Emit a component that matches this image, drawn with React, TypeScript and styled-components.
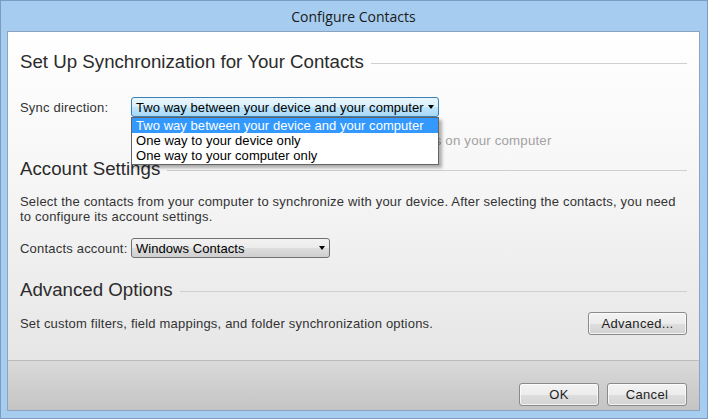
import React from "react";
import styled, { createGlobalStyle } from "styled-components";

const GlobalStyle = createGlobalStyle`
  html, body {
    margin: 0;
    padding: 0;
    background: #ffffff;
  }
  body {
    font-family: "Liberation Sans", Arial, sans-serif;
    color: #1e1e1e;
  }
`;

const Window = styled.div`
  width: 708px;
  height: 419px;
  box-sizing: border-box;
  background: #a6cdf0;
  border: 1px solid #7b9cc2;
  display: flex;
  flex-direction: column;
  padding: 0 7px 7px 6px;
`;

const TitleBar = styled.div`
  height: 29px;
  display: flex;
  align-items: center;
  justify-content: center;
  font-family: "Open Sans", "Noto Sans", sans-serif;
  font-size: 14px;
  color: #1a1a1a;
  padding-top: 1px;
`;

const Panel = styled.div`
  flex: 1;
  display: flex;
  flex-direction: column;
  border: 1px solid #8ba3bf;
  min-height: 0;
`;

const Main = styled.div`
  flex: 1;
  position: relative;
  padding: 18px 12px 0 12px;
  background: linear-gradient(#ffffff 0%, #f6f6f6 45%, #e6e6e6 100%);
`;

const Heading = styled.div<{ $mt?: number }>`
  display: flex;
  align-items: center;
  height: 24px;
  margin-top: ${(p) => p.$mt ?? 0}px;
  font-size: 18.7px;
  color: #2b2b2b;
  white-space: nowrap;
  &::after {
    content: "";
    flex: 1;
    height: 1px;
    margin-left: 7px;
    margin-top: 2px;
    background: #cfcfcf;
  }
`;

const Row = styled.div<{ $mt?: number }>`
  display: flex;
  align-items: center;
  margin-top: ${(p) => p.$mt ?? 0}px;
  position: relative;
`;

const Label = styled.span`
  width: 111px;
  font-size: 13px;
  letter-spacing: 0.2px;
  color: #333;
`;

const Text = styled.p<{ $mt?: number }>`
  margin: ${(p) => p.$mt ?? 0}px 0 0 0;
  font-size: 13px;
  line-height: 15px;
  letter-spacing: 0.2px;
  color: #333;
`;

const Faded = styled.div`
  margin: 16px 0 0 111px;
  font-size: 13.3px;
  line-height: 16px;
  letter-spacing: 0.17px;
  color: #a2a2a2;
  white-space: nowrap;
`;

const SelectBox = styled.div<{ $w: number; $focused?: boolean }>`
  position: relative;
  width: ${(p) => p.$w}px;
  height: 20px;
  box-sizing: border-box;
  border: 1px solid ${(p) => (p.$focused ? "#3c7fb1" : "#707070")};
  border-radius: 3px;
  background: ${(p) =>
    p.$focused
      ? "linear-gradient(#eaf6fd 0%, #d9f0fc 50%, #bee6fd 51%, #a7d9f5 100%)"
      : "linear-gradient(#f2f2f2 0%, #ebebeb 50%, #dddddd 51%, #cfcfcf 100%)"};
  display: flex;
  align-items: center;
  padding: 0 4px;
  font-size: 13px;
  letter-spacing: 0.05px;
  color: #000;
  white-space: nowrap;
`;

const SelectText = styled.span`
  flex: 1;
`;

const Caret = styled.span`
  width: 0;
  height: 0;
  border-left: 3px solid transparent;
  border-right: 3px solid transparent;
  border-top: 4px solid #000;
  margin-left: 2px;
`;

const DropList = styled.div`
  position: absolute;
  left: 111px;
  top: 20px;
  width: 308px;
  box-sizing: border-box;
  border: 1px solid #646464;
  background: #fff;
  box-shadow: 3px 3px 3px rgba(0, 0, 0, 0.3);
  z-index: 5;
  padding-bottom: 1px;
`;

const Option = styled.div<{ $active?: boolean }>`
  height: 15px;
  line-height: 15px;
  padding: 0 4px;
  font-size: 13px;
  letter-spacing: 0.05px;
  white-space: nowrap;
  background: ${(p) => (p.$active ? "#3399ff" : "transparent")};
  color: ${(p) => (p.$active ? "#fff" : "#000")};
`;

const Spacer = styled.div`
  flex: 1;
`;

const Button = styled.button<{ $w: number }>`
  width: ${(p) => p.$w}px;
  height: 23px;
  box-sizing: border-box;
  border: 1px solid #8a8a8a;
  border-radius: 3px;
  background: linear-gradient(#f3f3f3 0%, #ececec 50%, #dedede 51%, #d3d3d3 100%);
  box-shadow: inset 0 0 0 1px rgba(255, 255, 255, 0.7);
  font-family: "Liberation Sans", Arial, sans-serif;
  font-size: 13px;
  letter-spacing: 0.3px;
  color: #1e1e1e;
  padding: 0;
`;

const Footer = styled.div`
  height: 50px;
  box-sizing: border-box;
  border-top: 1px solid #bcbcbc;
  background: linear-gradient(#dadada, #c4c4c4);
  display: flex;
  justify-content: flex-end;
  align-items: flex-start;
  gap: 8px;
  padding: 22px 12px 0 0;
`;

const syncOptions = [
  "Two way between your device and your computer",
  "One way to your device only",
  "One way to your computer only",
];

export default function App() {
  return (
    <>
      <GlobalStyle />
      <Window>
        <TitleBar>Configure Contacts</TitleBar>
        <Panel>
          <Main>
            <Heading>Set Up Synchronization for Your Contacts</Heading>
            <Row $mt={23}>
              <Label>Sync direction:</Label>
              <SelectBox $w={308} $focused>
                <SelectText>{syncOptions[0]}</SelectText>
                <Caret />
              </SelectBox>
              <DropList>
                {syncOptions.map((o, i) => (
                  <Option key={o} $active={i === 0}>
                    {o}
                  </Option>
                ))}
              </DropList>
            </Row>
            <Faded>Changes are synchronized both ways with contacts on your computer</Faded>
            <Heading $mt={8}>Account Settings</Heading>
            <Text $mt={13}>
              Select the contacts from your computer to synchronize with your device. After selecting the contacts, you need to
              configure its account settings.
            </Text>
            <Row $mt={14}>
              <Label>Contacts account:</Label>
              <SelectBox $w={199}>
                <SelectText>Windows Contacts</SelectText>
                <Caret />
              </SelectBox>
            </Row>
            <Heading $mt={20}>Advanced Options</Heading>
            <Row $mt={10}>
              <Text>Set custom filters, field mappings, and folder synchronization options.</Text>
              <Spacer />
              <Button $w={99}>Advanced...</Button>
            </Row>
          </Main>
          <Footer>
            <Button $w={80}>OK</Button>
            <Button $w={80}>Cancel</Button>
          </Footer>
        </Panel>
      </Window>
    </>
  );
}
